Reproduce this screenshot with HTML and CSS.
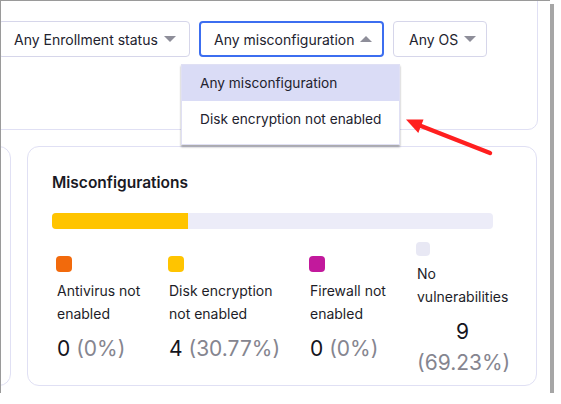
FILE: index.html
```html
<!DOCTYPE html>
<html>
<head>
<meta charset="utf-8">
<link rel="stylesheet" href="styles.css">
</head>
<body>
<div class="frame">
  <div class="filters-card">
    <div class="filters">
      <button class="select select-enroll">Any Enrollment status <span class="caret"></span></button>
      <button class="select select-active">Any misconfiguration <span class="caret caret-up"></span></button>
      <button class="select select-os">Any OS <span class="caret"></span></button>
    </div>
  </div>

  <div class="cards-row">
    <div class="card card-side"></div>
    <div class="card card-main">
      <h2 class="card-title">Misconfigurations</h2>
      <div class="bar"><div class="bar-fill" style="width:30.77%"></div></div>
      <div class="legend">
        <div class="legend-item">
          <span class="swatch swatch-orange"></span>
          <div class="legend-label">Antivirus not enabled</div>
          <div class="legend-value"><span class="num">0</span> <span class="pct">(0%)</span></div>
        </div>
        <div class="legend-item">
          <span class="swatch swatch-yellow"></span>
          <div class="legend-label">Disk encryption not enabled</div>
          <div class="legend-value"><span class="num">4</span> <span class="pct">(30.77%)</span></div>
        </div>
        <div class="legend-item">
          <span class="swatch swatch-purple"></span>
          <div class="legend-label">Firewall not enabled</div>
          <div class="legend-value"><span class="num">0</span> <span class="pct">(0%)</span></div>
        </div>
        <div class="legend-item legend-none">
          <span class="swatch swatch-none"></span>
          <div class="legend-label">No vulnerabilities</div>
          <div class="legend-value"><div class="num">9</div><div class="pct">(69.23%)</div></div>
        </div>
      </div>
    </div>
  </div>

  <ul class="menu">
    <li class="menu-item menu-item-active">Any misconfiguration</li>
    <li class="menu-item">Disk encryption not enabled</li>
  </ul>

  <svg class="arrow" width="100" height="50" viewBox="400 112 100 50" aria-hidden="true">
    <line x1="490" y1="153" x2="416" y2="124" stroke="#ff1f1f" stroke-width="4.5" stroke-linecap="round"/>
    <polygon points="406,119.5 423.5,119.4 418.3,133" fill="#ff1f1f"/>
  </svg>
</div>
</body>
</html>
```

FILE: styles.css
```css
* { box-sizing: border-box; }

html, body {
  margin: 0;
  padding: 0;
  background: #ffffff;
}

body {
  font-family: Inter, "Noto Sans", "Liberation Sans", sans-serif;
  color: #1f1f2b;
}

.frame {
  position: relative;
  width: 550px;
  height: 393px;
  border-left: 1px solid #9a9a9a;
  border-top: 1px solid #9a9a9a;
  box-shadow: 4px 4px 0 #a6a6a6;
  overflow: hidden;
  background: #fff;
}

/* top filter card */
.filters-card {
  width: 558px;
  height: 150px;
  margin: -21px 0 0 -21px;
  padding: 40px 0 0 17px;
  border: 1px solid #e0e0f4;
  border-radius: 10px;
}

.filters {
  display: flex;
  gap: 9px;
}

.select {
  display: flex;
  align-items: center;
  gap: 6px;
  height: 36px;
  padding: 0 12px 0 15px;
  border: 1px solid #d6d6ea;
  border-radius: 4px;
  background: #fff;
  font-family: inherit;
  font-size: 14px;
  color: #22222e;
  white-space: nowrap;
}

.select-enroll { width: 192px; }
.select-active {
  width: 185px;
  border: 2px solid #3c6ef0;
  padding-left: 13px;
}
.select-os { width: 94px; }

.caret {
  flex: none;
  width: 0;
  height: 0;
  border-left: 6px solid transparent;
  border-right: 6px solid transparent;
  border-top: 6px solid #8e8e99;
}
.caret-up {
  border-top: none;
  border-bottom: 6px solid #8e8e99;
}

/* cards */
.cards-row {
  display: flex;
  gap: 16px;
  margin-top: 16px;
  margin-left: -101px;
}

.card {
  height: 240px;
  border: 1px solid #e0e0f4;
  border-radius: 12px;
  background: #fff;
}

.card-side { width: 111px; flex: none; }

.card-main {
  width: 510px;
  flex: none;
  padding: 26px 0 0 24px;
}

.card-title {
  margin: 0;
  font-size: 15.5px;
  line-height: 20px;
  font-weight: 600;
  color: #1a1a24;
}

.bar {
  width: 441px;
  height: 16px;
  margin-top: 20px;
  background: #ececf8;
  border-radius: 4px;
  overflow: hidden;
}

.bar-fill {
  height: 100%;
  background: #ffc400;
}

.legend {
  display: grid;
  grid-template-columns: 112px 141px 107px 1fr;
  align-items: center;
  margin: 13px 0 0 4px;
}

.legend-item {
  display: flex;
  flex-direction: column;
  align-items: flex-start;
}

.swatch {
  width: 16px;
  height: 16px;
  border-radius: 4px;
}
.swatch-orange { background: #f26a0c; }
.swatch-yellow { background: #ffc400; }
.swatch-purple { background: #c2199c; }
.swatch-none { background: #e8e8f4; width: 14px; height: 14px; }

.legend-label {
  max-width: 112px;
  margin-top: 7px;
  font-size: 14px;
  line-height: 23px;
  padding-left: 1px;
  color: #1d1d28;
}

.legend-none .legend-label {
  max-width: 96px;
  margin-top: 6px;
}

.legend-value {
  margin-top: 9px;
  font-size: 21px;
  line-height: 30px;
  padding-left: 1px;
  white-space: nowrap;
}

.legend-none .legend-value {
  width: 92px;
  text-align: center;
  margin-top: 8px;
  line-height: 31px;
}

.num { color: #14141c; }
.pct { color: #85858f; }

/* dropdown menu */
.menu {
  position: absolute;
  top: 63px;
  left: 180px;
  width: 219px;
  margin: 0;
  padding: 0 0 7px;
  list-style: none;
  background: #fff;
  border: 1px solid #e0e0f4;
  box-shadow: 0 2px 2px rgba(0, 0, 0, 0.35);
}

.menu-item {
  height: 36px;
  padding-left: 18px;
  display: flex;
  align-items: center;
  font-size: 13.7px;
  color: #22222e;
}

.menu-item-active { background: #dadcf6; }

/* annotation arrow */
.arrow {
  position: absolute;
  left: 399px;
  top: 111px;
}
```
